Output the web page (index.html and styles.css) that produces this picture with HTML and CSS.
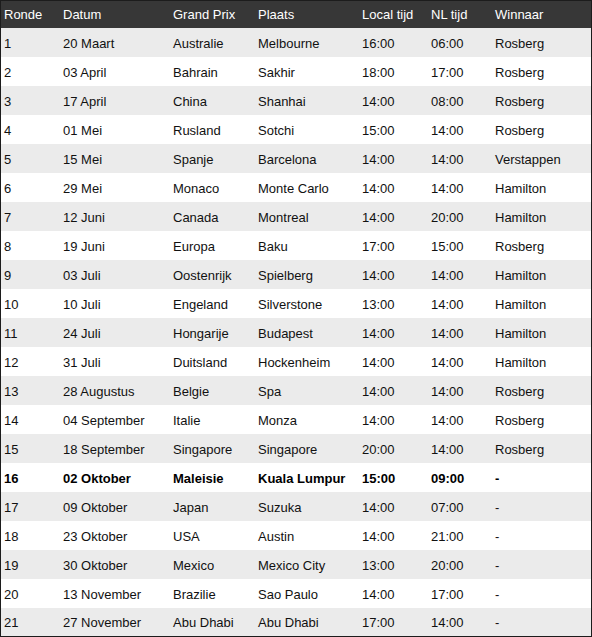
FILE: index.html
```html
<!DOCTYPE html>
<html lang="nl">
<head>
<meta charset="utf-8">
<title>Kalender</title>
<link rel="stylesheet" href="styles.css">
</head>
<body>
<div class="frame">
<table class="schedule">
<colgroup>
<col class="c-ronde"><col class="c-datum"><col class="c-gp"><col class="c-plaats"><col class="c-local"><col class="c-nl"><col class="c-winnaar">
</colgroup>
<thead>
<tr><th>Ronde</th><th>Datum</th><th>Grand Prix</th><th>Plaats</th><th>Local tijd</th><th>NL tijd</th><th>Winnaar</th></tr>
</thead>
<tbody>
<tr><td>1</td><td>20 Maart</td><td>Australie</td><td>Melbourne</td><td>16:00</td><td>06:00</td><td>Rosberg</td></tr>
<tr><td>2</td><td>03 April</td><td>Bahrain</td><td>Sakhir</td><td>18:00</td><td>17:00</td><td>Rosberg</td></tr>
<tr><td>3</td><td>17 April</td><td>China</td><td>Shanhai</td><td>14:00</td><td>08:00</td><td>Rosberg</td></tr>
<tr><td>4</td><td>01 Mei</td><td>Rusland</td><td>Sotchi</td><td>15:00</td><td>14:00</td><td>Rosberg</td></tr>
<tr><td>5</td><td>15 Mei</td><td>Spanje</td><td>Barcelona</td><td>14:00</td><td>14:00</td><td>Verstappen</td></tr>
<tr><td>6</td><td>29 Mei</td><td>Monaco</td><td>Monte Carlo</td><td>14:00</td><td>14:00</td><td>Hamilton</td></tr>
<tr><td>7</td><td>12 Juni</td><td>Canada</td><td>Montreal</td><td>14:00</td><td>20:00</td><td>Hamilton</td></tr>
<tr><td>8</td><td>19 Juni</td><td>Europa</td><td>Baku</td><td>17:00</td><td>15:00</td><td>Rosberg</td></tr>
<tr><td>9</td><td>03 Juli</td><td>Oostenrijk</td><td>Spielberg</td><td>14:00</td><td>14:00</td><td>Hamilton</td></tr>
<tr><td>10</td><td>10 Juli</td><td>Engeland</td><td>Silverstone</td><td>13:00</td><td>14:00</td><td>Hamilton</td></tr>
<tr><td>11</td><td>24 Juli</td><td>Hongarije</td><td>Budapest</td><td>14:00</td><td>14:00</td><td>Hamilton</td></tr>
<tr><td>12</td><td>31 Juli</td><td>Duitsland</td><td>Hockenheim</td><td>14:00</td><td>14:00</td><td>Hamilton</td></tr>
<tr><td>13</td><td>28 Augustus</td><td>Belgie</td><td>Spa</td><td>14:00</td><td>14:00</td><td>Rosberg</td></tr>
<tr><td>14</td><td>04 September</td><td>Italie</td><td>Monza</td><td>14:00</td><td>14:00</td><td>Rosberg</td></tr>
<tr><td>15</td><td>18 September</td><td>Singapore</td><td>Singapore</td><td>20:00</td><td>14:00</td><td>Rosberg</td></tr>
<tr class="current"><td>16</td><td>02 Oktober</td><td>Maleisie</td><td>Kuala Lumpur</td><td>15:00</td><td>09:00</td><td>-</td></tr>
<tr><td>17</td><td>09 Oktober</td><td>Japan</td><td>Suzuka</td><td>14:00</td><td>07:00</td><td>-</td></tr>
<tr><td>18</td><td>23 Oktober</td><td>USA</td><td>Austin</td><td>14:00</td><td>21:00</td><td>-</td></tr>
<tr><td>19</td><td>30 Oktober</td><td>Mexico</td><td>Mexico City</td><td>13:00</td><td>20:00</td><td>-</td></tr>
<tr><td>20</td><td>13 November</td><td>Brazilie</td><td>Sao Paulo</td><td>14:00</td><td>17:00</td><td>-</td></tr>
<tr><td>21</td><td>27 November</td><td>Abu Dhabi</td><td>Abu Dhabi</td><td>17:00</td><td>14:00</td><td>-</td></tr>
</tbody>
</table>
</div>
</body>
</html>
```
FILE: styles.css
```css
html, body {
  margin: 0;
  padding: 0;
  background: #ffffff;
}
.frame {
  width: 592px;
  box-sizing: border-box;
  border: 1px solid #1c1c1c;
  border-bottom: 0;
}
.schedule {
  width: 100%;
  border-collapse: collapse;
  table-layout: fixed;
  font-family: "Liberation Sans", Arial, sans-serif;
  font-size: 13px;
  color: #111111;
}
.c-ronde { width: 57px; }
.c-datum { width: 110px; }
.c-gp { width: 85px; }
.c-plaats { width: 104px; }
.c-local { width: 69px; }
.c-nl { width: 64px; }
.schedule th {
  background: #373737;
  color: #ffffff;
  font-weight: normal;
  text-align: left;
  height: 27px;
  padding: 0 0 0 5px;
  vertical-align: middle;
  white-space: nowrap;
}
.schedule td {
  height: 28px;
  padding: 1px 0 0 5px;
  vertical-align: middle;
  white-space: nowrap;
}
.schedule th:first-child,
.schedule td:first-child {
  padding-left: 3px;
}
.schedule tbody tr:nth-child(odd) td {
  background: #ebebeb;
}
.schedule tbody tr:last-child td {
  height: 27px;
  border-bottom: 1px solid #1c1c1c;
}
.schedule tr.current td {
  font-weight: bold;
  color: #000000;
}
```
